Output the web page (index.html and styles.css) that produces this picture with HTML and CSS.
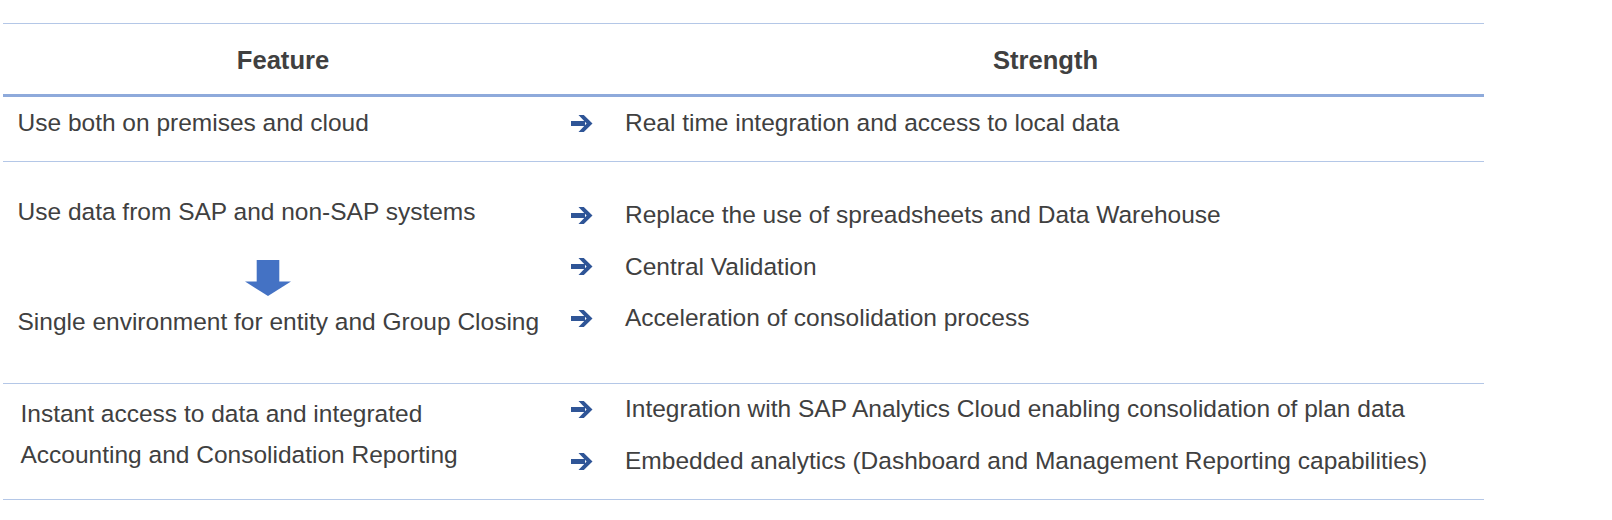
FILE: index.html
```html
<!DOCTYPE html>
<html lang="en">
<head>
<meta charset="utf-8">
<title>Feature / Strength</title>
<link rel="stylesheet" href="styles.css">
</head>
<body>
<div class="table">
  <div class="head">
    <div class="th">Feature</div>
    <div></div>
    <div class="th">Strength</div>
  </div>

  <div class="row row1">
    <div class="feat">
      <div class="line">Use both on premises and cloud</div>
    </div>
    <div class="strengths">
      <div class="item"><span class="arr"><svg width="22" height="17" viewBox="0 0 22 17"><rect x="0" y="6" width="14" height="5" fill="#2f5597"/><polygon points="7.5,0 12.8,0 21.5,8.5 12.8,17 7.5,17 15.6,8.5" fill="#2f5597"/></svg></span><span class="txt">Real time integration and access to local data</span></div>
    </div>
  </div>

  <div class="row row2">
    <div class="feat">
      <div class="line">Use data from SAP and non-SAP systems</div>
      <svg class="down" width="46" height="36" viewBox="0 0 46 36"><rect x="11.7" y="0" width="22.6" height="22" fill="#4472c4"/><polygon points="0,21.5 46,21.5 23,36" fill="#4472c4"/></svg>
      <div class="line">Single environment for entity and Group Closing</div>
    </div>
    <div class="strengths">
      <div class="item"><span class="arr"><svg width="22" height="17" viewBox="0 0 22 17"><rect x="0" y="6" width="14" height="5" fill="#2f5597"/><polygon points="7.5,0 12.8,0 21.5,8.5 12.8,17 7.5,17 15.6,8.5" fill="#2f5597"/></svg></span><span class="txt">Replace the use of spreadsheets and Data Warehouse</span></div>
      <div class="item"><span class="arr"><svg width="22" height="17" viewBox="0 0 22 17"><rect x="0" y="6" width="14" height="5" fill="#2f5597"/><polygon points="7.5,0 12.8,0 21.5,8.5 12.8,17 7.5,17 15.6,8.5" fill="#2f5597"/></svg></span><span class="txt">Central Validation</span></div>
      <div class="item"><span class="arr"><svg width="22" height="17" viewBox="0 0 22 17"><rect x="0" y="6" width="14" height="5" fill="#2f5597"/><polygon points="7.5,0 12.8,0 21.5,8.5 12.8,17 7.5,17 15.6,8.5" fill="#2f5597"/></svg></span><span class="txt">Acceleration of consolidation process</span></div>
    </div>
  </div>

  <div class="row row3">
    <div class="feat">
      <div class="line">Instant access to data and integrated</div>
      <div class="line">Accounting and Consolidation Reporting</div>
    </div>
    <div class="strengths">
      <div class="item"><span class="arr"><svg width="22" height="17" viewBox="0 0 22 17"><rect x="0" y="6" width="14" height="5" fill="#2f5597"/><polygon points="7.5,0 12.8,0 21.5,8.5 12.8,17 7.5,17 15.6,8.5" fill="#2f5597"/></svg></span><span class="txt">Integration with SAP Analytics Cloud enabling consolidation of plan data</span></div>
      <div class="item"><span class="arr"><svg width="22" height="17" viewBox="0 0 22 17"><rect x="0" y="6" width="14" height="5" fill="#2f5597"/><polygon points="7.5,0 12.8,0 21.5,8.5 12.8,17 7.5,17 15.6,8.5" fill="#2f5597"/></svg></span><span class="txt">Embedded analytics (Dashboard and Management Reporting capabilities)</span></div>
    </div>
  </div>
</div>
</body>
</html>
```

FILE: styles.css
```css
html, body {
  margin: 0;
  padding: 0;
  background: #ffffff;
}

.table {
  margin: 23px 0 0 3px;
  width: 1481px;
  font-family: "Liberation Sans", Arial, sans-serif;
  color: #404040;
  font-size: 24.5px;
}

.head {
  display: grid;
  grid-template-columns: 560px 44px 1fr;
  border-top: 1px solid #b4c7e7;
  border-bottom: 3px solid #8eaadb;
  height: 70px;
  align-items: center;
}

.th {
  font-weight: bold;
  font-size: 25.6px;
  line-height: 30px;
  text-align: center;
  padding-top: 2px;
}

.row {
  display: grid;
  grid-template-columns: 560px 1fr;
  border-bottom: 1px solid #b4c7e7;
  box-sizing: border-box;
}

.line {
  line-height: 28px;
  white-space: nowrap;
}

.feat {
  display: flex;
  flex-direction: column;
  align-items: flex-start;
  padding-left: 14.5px;
}

.strengths {
  display: flex;
  flex-direction: column;
}

.item {
  display: flex;
  align-items: center;
  height: 28px;
  white-space: nowrap;
}

.arr {
  width: 62px;
  flex: none;
  display: flex;
  align-items: center;
  padding-left: 8px;
  box-sizing: border-box;
}

.arr svg {
  display: block;
}

.txt {
  line-height: 28px;
}

/* row 1 */
.row1 {
  height: 65px;
}
.row1 .feat,
.row1 .strengths {
  padding-top: 12px;
}

/* row 2 */
.row2 {
  height: 222px;
}
.row2 .feat {
  padding-top: 36px;
}
.row2 .down {
  display: block;
  margin: 34px 0 12px 227.5px;
}
.row2 .strengths {
  padding-top: 39px;
  gap: 23.5px;
}

/* row 3 */
.row3 {
  height: 116px;
}
.row3 .feat {
  padding-top: 16px;
  padding-left: 17.5px;
  gap: 13px;
}
.row3 .strengths {
  padding-top: 11px;
  gap: 24px;
}
```
